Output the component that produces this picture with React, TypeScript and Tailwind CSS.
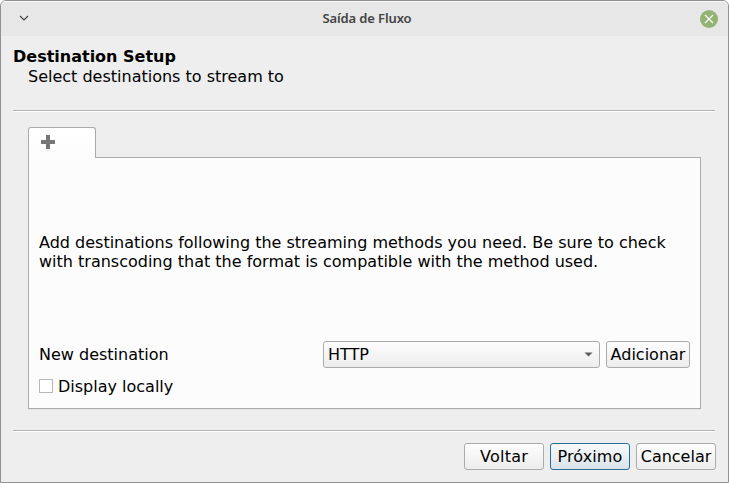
import type { ReactNode } from "react";

function Button({ children, className = "" }: { children: ReactNode; className?: string }) {
  return (
    <button
      className={`flex h-[27px] shrink-0 items-center justify-center whitespace-nowrap rounded-[3px] border pb-px leading-[19px] ${className}`}
    >
      {children}
    </button>
  );
}

const plain = "border-[#ababab] bg-linear-to-b from-[#fdfdfd] to-[#ededed]";

function Separator() {
  return <div className="ml-3 mr-[13px] h-[2px] shrink-0 border-t border-t-[#b4b4b4] bg-white" />;
}

export default function App() {
  return (
    <div className="h-[483px] w-[729px] overflow-hidden bg-white">
      <div className="flex h-full flex-col overflow-hidden rounded-t-[6px] border border-[#929092] bg-[#eeeeee] font-['DejaVu_Sans',sans-serif] text-[16px] leading-[19px] text-black">
        <header className="flex h-[35px] shrink-0 items-center justify-between border-t border-t-[#f8f8f8] bg-[#e7e7e7] pb-px pl-[18px] pr-[10px]">
          <svg className="mb-[2px] h-[8px] w-[10px]" viewBox="0 0 10 8" fill="none">
            <path d="M1 2L5 6L9 2" stroke="#444" strokeWidth="1.2" />
          </svg>
          <h1 className="pb-px pl-[5px] font-['Noto_Sans',sans-serif] text-[13px] font-semibold leading-[18px] tracking-[-0.12px] text-[#444444]">
            Saída de Fluxo
          </h1>
          <svg className="h-[18px] w-[18px]" viewBox="0 0 18 18" fill="none">
            <circle cx="9" cy="9" r="9" fill="#92b372" />
            <path d="M5 5L13 13M13 5L5 13" stroke="white" strokeWidth="1.2" />
          </svg>
        </header>

        <section className="h-[74px] shrink-0 pl-3 pt-[11px]">
          <h2 className="font-bold">Destination Setup</h2>
          <p className="pl-[15px] pt-px">Select destinations to stream to</p>
        </section>
        <Separator />

        <main className="flex h-[318px] shrink-0 flex-col px-[27px] pt-[15px]">
          <div className="z-10 flex h-[31px] w-[68px] shrink-0 rounded-t-[3px] border border-b-0 border-[#ababab] bg-linear-to-b from-white to-[#fcfcfc] pl-3 pt-[7px]">
            <svg className="h-[14px] w-[14px]" viewBox="0 0 14 14">
              <path d="M5 0H9V5H14V9H9V14H5V9H0V5H5Z" fill="#777777" />
            </svg>
          </div>
          <div className="-mt-px flex h-[252px] w-[673px] shrink-0 flex-col border border-[#ababab] bg-[#fcfcfc] px-[10px] pt-[75px] shadow-[0_1px_0_#e2e2e2]">
            <p className="h-[108px] w-[640px] shrink-0">
              Add destinations following the streaming methods you need. Be sure to check
              <br />
              with transcoding that the format is compatible with the method used.
            </p>
            <div className="flex h-[27px] shrink-0 items-center">
              <span className="flex-1 pb-px">New destination</span>
              <div
                className={`mr-[6px] flex h-[27px] w-[277px] items-center justify-between rounded-[3px] border pb-px pl-1 pr-[6px] ${plain}`}
              >
                HTTP
                <svg className="h-[5px] w-[9px]" viewBox="0 0 9 5">
                  <path d="M0.5 0.5H8.5L4.5 4.5Z" fill="#5c5c5c" />
                </svg>
              </div>
              <Button className={`w-[84px] ${plain}`}>Adicionar</Button>
            </div>
            <label className="mt-[9px] flex h-[19px] items-center gap-[5px]">
              <span className="mb-[2px] h-[14px] w-[14px] border border-[#b8b8b8] bg-white" />
              Display locally
            </label>
          </div>
        </main>
        <Separator />

        <footer className="flex justify-end gap-[6px] pr-3 pt-[11px]">
          <Button className={`w-[80px] tracking-[0.25px] ${plain}`}>Voltar</Button>
          <Button className="w-[80px] border-[#2b6d99] bg-linear-to-b from-[#f8fafb] to-[#dae3ea] tracking-[0.1px]">
            Próximo
          </Button>
          <Button className={`w-[80px] ${plain}`}>Cancelar</Button>
        </footer>
      </div>
    </div>
  );
}
